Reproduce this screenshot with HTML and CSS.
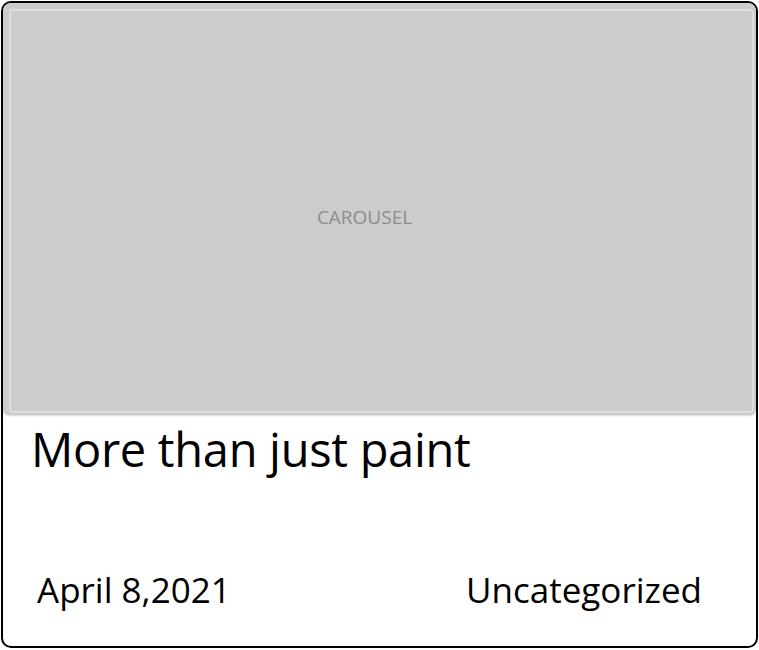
FILE: index.html
```html
<!DOCTYPE html>
<html>
<head>
<meta charset="utf-8">
<link rel="stylesheet" href="styles.css">
</head>
<body>
<div class="card">
  <div class="carousel">
    <div class="carousel-inner">CAROUSEL</div>
  </div>
  <h2 class="title">More than just paint</h2>
  <div class="meta">
    <span class="date">April 8,2021</span>
    <span class="category">Uncategorized</span>
  </div>
</div>
</body>
</html>
```

FILE: styles.css
```css
html, body {
  margin: 0;
  padding: 0;
  background: #fff;
}
body {
  padding: 1px;
  font-family: "Open Sans", "Noto Sans", sans-serif;
}
.card {
  box-sizing: border-box;
  width: 757px;
  height: 647px;
  border: 2px solid #000;
  border-radius: 10px;
  display: flex;
  flex-direction: column;
  overflow: hidden;
}
.carousel {
  box-sizing: border-box;
  height: 412px;
  background: #cccccc;
  border-radius: 6px;
  padding: 6px 2px 2px 6px;
  box-shadow: 0 1px 2px rgba(0,0,0,0.15);
  display: flex;
}
.carousel-inner {
  flex: 1;
  border: 2px solid #dedede;
  border-radius: 4px;
  display: flex;
  align-items: center;
  justify-content: center;
  color: #8c8c8c;
  font-size: 19px;
  padding: 12px 34px 0 0;
}
.title {
  margin: 4px 0 0 28px;
  font-weight: 400;
  font-size: 47px;
  line-height: 60px;
  color: #000;
  letter-spacing: -0.3px;
}
.meta {
  margin-top: auto;
  display: flex;
  justify-content: space-between;
  padding: 0 54px 33px 34px;
  font-size: 35px;
  line-height: 46px;
  color: #000;
}
```
